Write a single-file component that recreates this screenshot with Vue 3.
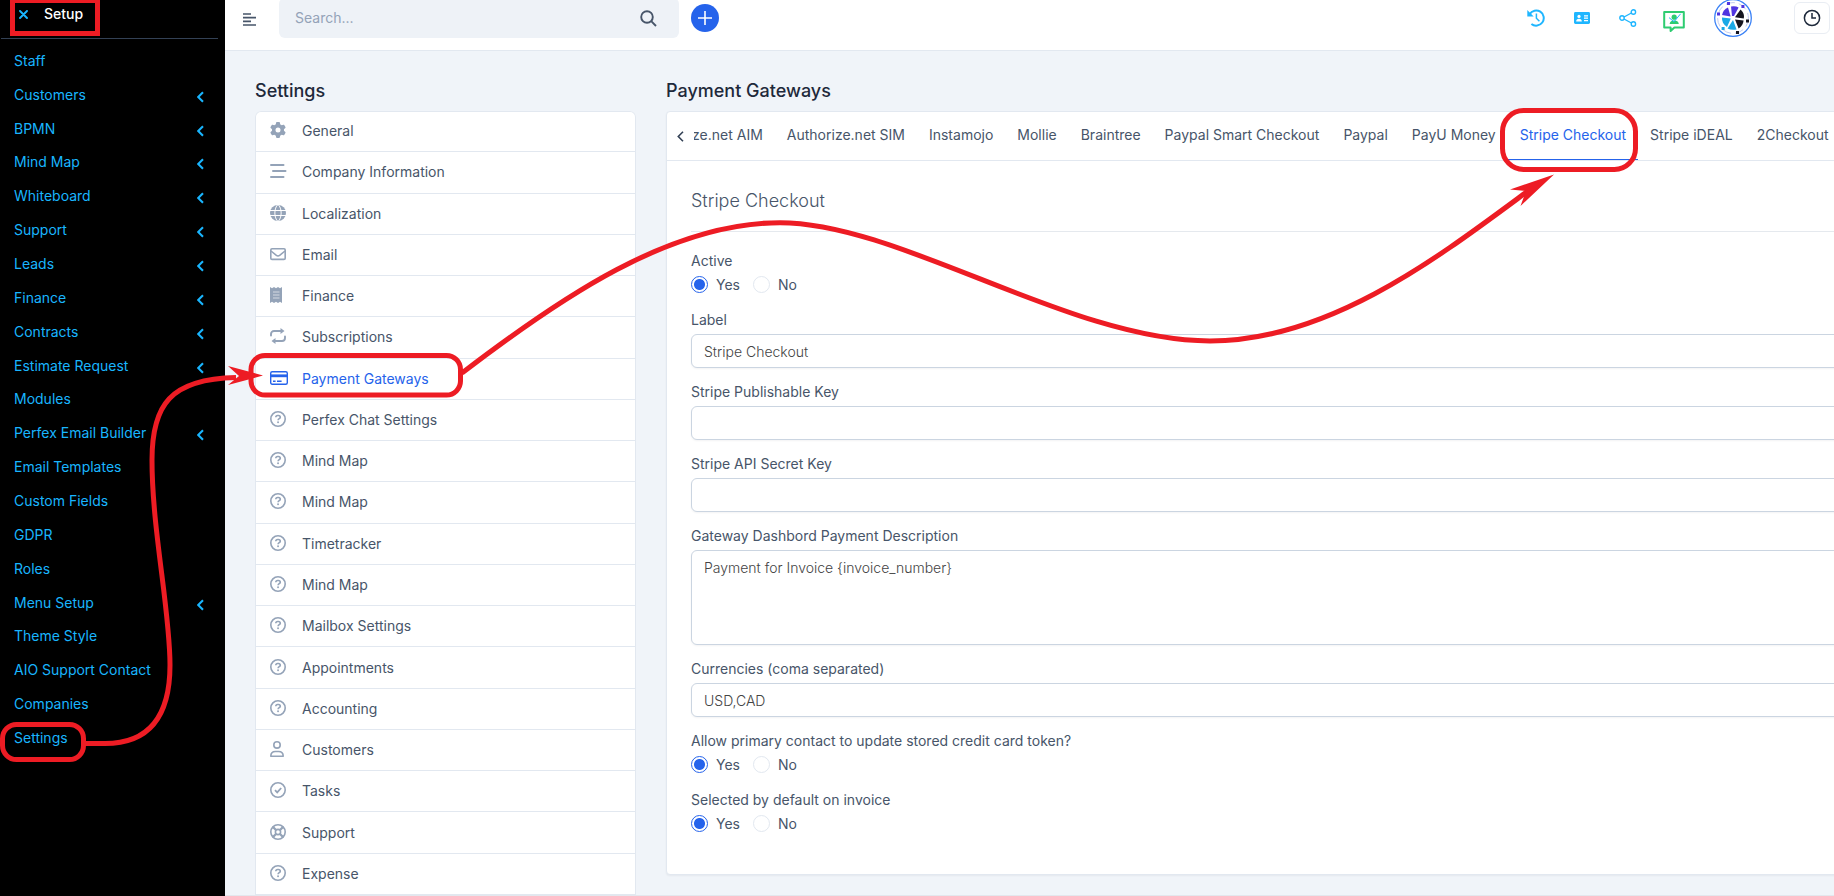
<script setup>
import { reactive } from 'vue'

const setupMenu = [
  { label: 'Staff' },
  { label: 'Customers', sub: true },
  { label: 'BPMN', sub: true },
  { label: 'Mind Map', sub: true },
  { label: 'Whiteboard', sub: true },
  { label: 'Support', sub: true },
  { label: 'Leads', sub: true },
  { label: 'Finance', sub: true },
  { label: 'Contracts', sub: true },
  { label: 'Estimate Request', sub: true },
  { label: 'Modules' },
  { label: 'Perfex Email Builder', sub: true },
  { label: 'Email Templates' },
  { label: 'Custom Fields' },
  { label: 'GDPR' },
  { label: 'Roles' },
  { label: 'Menu Setup', sub: true },
  { label: 'Theme Style' },
  { label: 'AIO Support Contact' },
  { label: 'Companies' },
  { label: 'Settings' },
]

const settings = [
  { label: 'General', icon: 'gear' },
  { label: 'Company Information', icon: 'bars' },
  { label: 'Localization', icon: 'globe' },
  { label: 'Email', icon: 'mail' },
  { label: 'Finance', icon: 'receipt' },
  { label: 'Subscriptions', icon: 'repeat' },
  { label: 'Payment Gateways', icon: 'card', active: true },
  { label: 'Perfex Chat Settings', icon: 'question' },
  { label: 'Mind Map', icon: 'question' },
  { label: 'Mind Map', icon: 'question' },
  { label: 'Timetracker', icon: 'question' },
  { label: 'Mind Map', icon: 'question' },
  { label: 'Mailbox Settings', icon: 'question' },
  { label: 'Appointments', icon: 'question' },
  { label: 'Accounting', icon: 'question' },
  { label: 'Customers', icon: 'user' },
  { label: 'Tasks', icon: 'check' },
  { label: 'Support', icon: 'ring' },
  { label: 'Expense', icon: 'question' },
]

const tabs = [
  'Authorize.net AIM',
  'Authorize.net SIM',
  'Instamojo',
  'Mollie',
  'Braintree',
  'Paypal Smart Checkout',
  'Paypal',
  'PayU Money',
  'Stripe Checkout',
  'Stripe iDEAL',
  '2Checkout',
]
const activeTab = 'Stripe Checkout'

const form = reactive({
  active: 'Yes',
  label: 'Stripe Checkout',
  publishable: '',
  secret: '',
  description: 'Payment for Invoice {invoice_number}',
  currencies: 'USD,CAD',
  updateToken: 'Yes',
  byDefault: 'Yes',
})
const choices = ['Yes', 'No']
</script>

<template>
  <div class="page">
    <aside class="sidebar">
      <div class="side-head">
        <button class="close" type="button" aria-label="Close setup menu">
          <svg width="9" height="9" viewBox="0 0 9 9"><path d="M1 1l7 7M8 1L1 8" fill="none" stroke="currentColor" stroke-width="1.9" stroke-linecap="round" /></svg>
        </button>
        <span>Setup</span>
      </div>
      <nav class="side-nav" aria-label="Setup">
        <a v-for="m in setupMenu" :key="m.label" href="#">
          <span>{{ m.label }}</span>
          <svg v-if="m.sub" class="caret" width="7" height="12" viewBox="0 0 7 12"><path d="M6 1.2L1.2 6L6 10.8" fill="none" stroke="currentColor" stroke-width="2.1" /></svg>
        </a>
      </nav>
    </aside>

    <div class="content">
      <header class="topbar">
        <button class="menu-btn" type="button" aria-label="Toggle menu">
          <svg width="13" height="13" viewBox="0 0 13 13"><path d="M0 1h8M0 4.7h13M0 8.3h8M0 12h13" stroke="#475569" stroke-width="1.7" /></svg>
        </button>
        <div class="search">
          <input type="search" placeholder="Search..." aria-label="Search" />
          <button type="button" aria-label="Run search">
            <svg width="17" height="17" viewBox="0 0 17 17"><g fill="none" stroke="#475569" stroke-width="1.9"><circle cx="7" cy="7" r="5.8" /><path d="M11.2 11.2l4.8 4.8" /></g></svg>
          </button>
        </div>
        <button class="add" type="button" aria-label="Add">
          <svg width="14" height="14" viewBox="0 0 14 14"><path d="M7 0v14M0 7h14" stroke="#fff" stroke-width="1.6" /></svg>
        </button>

        <div class="tools">
          <button type="button" aria-label="History">
            <svg width="18" height="18" viewBox="0 0 18 18"><g fill="none" stroke="#1fb6ff"><path d="M2.6 5.2A7.6 7.6 0 1 1 4.4 15" stroke-width="2" /><path d="M9.4 4.6v4.6l3 3" stroke-width="1.5" /></g><path d="M.3 1v6.4h6.4z" fill="#1fb6ff" /></svg>
          </button>
          <button type="button" aria-label="Contacts">
            <svg width="16" height="12" viewBox="0 0 16 12"><rect width="16" height="12" rx="1.4" fill="#1fb6ff" /><circle cx="5" cy="4.4" r="1.6" fill="#fff" /><path d="M2.2 9.4c0-1.8 1-2.6 2.8-2.6s2.8.8 2.8 2.6zM10 3.2h4v1.2h-4zM10 5.6h4v1.2h-4zM10 8h4v1.2h-4z" fill="#fff" /></svg>
          </button>
          <button type="button" aria-label="Share">
            <svg width="18" height="18" viewBox="0 0 18 18"><g fill="none" stroke="#1fb6ff" stroke-width="1.4"><circle cx="3" cy="9" r="2.2" /><circle cx="14.4" cy="3" r="2.2" /><circle cx="14.4" cy="15" r="2.2" /><path d="M5 8l7.4-4M5 10l7.4 4" /></g></svg>
          </button>
          <button type="button" aria-label="Support chat">
            <svg width="24" height="30" viewBox="0 0 24 30"><path d="M2.2 9h19.6v15.4h-9.4L8.6 28v-3.6H2.2z" fill="none" stroke="#2ecc71" stroke-width="2" stroke-linejoin="round" /><circle cx="12.2" cy="14.2" r="2.6" fill="#2ecc71" /><path d="M7.6 21c.4-2.4 2-3.4 4.6-3.4s4.200 1 4.600 3.400z" fill="#2ecc71" /><path d="M7 14.600l5 4.200 6.600-8" fill="none" stroke="#1fb6ff" stroke-width="1" /></svg>
          </button>
        </div>
        <button class="avatar" type="button" aria-label="Profile">
          <svg width="38" height="38" viewBox="0 0 38 38">
            <circle cx="19" cy="19" r="18.300" fill="#fff" stroke="#3b82f6" stroke-width="1.300" />
            <circle cx="19" cy="19" r="15.400" fill="none" stroke="#c3ccf0" stroke-width="1" stroke-dasharray="9 4" />
            <path d="M18 17L17 7.600Q21 6.400 24.600 8.600L20 17z" fill="#4f35e0" />
            <path d="M16.600 17.600L8 16Q9 10.800 14 8.600z" fill="#4f35e0" />
            <path d="M21 18.200L26.600 10.600Q31 15 29.800 19.400z" fill="#15151f" />
            <path d="M21 20.400L29.600 21.400Q29 26.600 24.600 29.600z" fill="#15151f" />
            <path d="M19 21L22.600 30.400Q17.600 31.600 13.600 29.600z" fill="#19a9e6" />
            <path d="M16.800 19.400L13 28Q7.600 24.600 8 18.600z" fill="#19a9e6" />
            <path d="M13 3h3v3h-3zM27.400 6h3v3h-3zM3 13.600h3v3h-3z" fill="#4f35e0" />
            <path d="M32 20.600h3v3h-3zM22 32h3v3h-3z" fill="#15151f" />
            <path d="M7.600 28h3v3h-3z" fill="#19a9e6" />
          </svg>
        </button>
        <button class="clock" type="button" aria-label="Timers">
          <svg width="18" height="18" viewBox="0 0 18 18"><g fill="none" stroke="#1e293b" stroke-width="1.500"><circle cx="9" cy="9" r="7.600" /><path d="M9 4v5h4" /></g></svg>
        </button>
      </header>

      <main class="grid">
        <section class="col-list">
          <h2>Settings</h2>
          <ul class="settings">
            <li v-for="(s, i) in settings" :key="i">
              <a href="#" :class="{ on: s.active }">
                <svg width="18" height="18" viewBox="0 0 18 18" fill="none" stroke="currentColor" stroke-width="1.600">
                  <path v-if="s.icon === 'gear'" transform="translate(0 1) scale(.03125)" fill="currentColor" stroke="none" d="M495.900 166.600c3.200 8.700 .5 18.400-6.400 24.600l-43.300 39.400c1.100 8.300 1.700 16.800 1.700 25.400s-.6 17.100-1.700 25.400l43.300 39.400c6.900 6.200 9.600 15.900 6.400 24.600c-4.400 11.900-9.700 23.300-15.800 34.300l-4.700 8.100c-6.600 11-14 21.400-22.100 31.200c-5.900 7.200-15.700 9.600-24.500 6.800l-55.700-17.700c-13.400 10.300-28.200 18.900-44 25.400l-12.500 57.100c-2 9.100-9 16.300-18.200 17.800c-13.800 2.300-28 3.500-42.500 3.500s-28.700-1.200-42.500-3.500c-9.200-1.500-16.200-8.700-18.200-17.800l-12.500-57.100c-15.800-6.500-30.600-15.100-44-25.400L83.100 425.900c-8.800 2.800-18.600 .3-24.500-6.800c-8.100-9.800-15.500-20.200-22.100-31.200l-4.700-8.100c-6.100-11-11.400-22.400-15.800-34.300c-3.200-8.700-.5-18.400 6.400-24.600l43.300-39.400C64.600 273.100 64 264.600 64 256s.6-17.100 1.700-25.400L22.400 191.200c-6.900-6.200-9.600-15.900-6.400-24.600c4.400-11.900 9.700-23.300 15.800-34.300l4.700-8.100c6.600-11 14-21.400 22.100-31.200c5.900-7.200 15.700-9.600 24.500-6.800l55.700 17.700c13.400-10.300 28.200-18.900 44-25.400l12.500-57.100c2-9.100 9-16.300 18.200-17.800C227.300 1.200 241.500 0 256 0s28.700 1.200 42.500 3.500c9.200 1.500 16.200 8.700 18.200 17.800l12.500 57.100c15.800 6.500 30.600 15.100 44 25.400l55.700-17.700c8.800-2.800 18.600-.3 24.500 6.800c8.100 9.800 15.500 20.200 22.100 31.200l4.700 8.100c6.100 11 11.400 22.400 15.800 34.300zM256 336a80 80 0 1 0 0-160 80 80 0 1 0 0 160z" />
                  <path v-else-if="s.icon === 'bars'" d="M1 3h12.500M3 9h12.500M1 15h12.500" stroke-width="2" stroke-linecap="round" />
                  <g v-else-if="s.icon === 'globe'">
                    <circle cx="8" cy="9" r="8" fill="currentColor" stroke="none" />
                    <path d="M0 6.500h16M0 11.500h16" stroke="#fff" stroke-width="1" />
                    <path d="M8 .5C3.800 4 3.800 14 8 17.500C12.200 14 12.200 4 8 .5z" stroke="#fff" stroke-width="1" />
                  </g>
                  <g v-else-if="s.icon === 'mail'" stroke-linejoin="round">
                    <rect x=".8" y="3.800" width="14.400" height="10.600" rx="1.200" />
                    <path d="M1 6l5.400 4.400q1.600 1.200 3.200 0L15 6" />
                  </g>
                  <g v-else-if="s.icon === 'receipt'">
                    <path d="M0 1l2 1.300L4 1l2 1.300L8 1l2 1.300L12 1v16l-2-1.300L8 17l-2-1.300L4 17l-2-1.300L0 17z" fill="currentColor" stroke="none" />
                    <path d="M3 6h6.500M3 9h6.500M3 12h6.500" stroke="#fff" stroke-width="1" opacity=".6" />
                  </g>
                  <g v-else-if="s.icon === 'repeat'" stroke-width="1.900">
                    <path d="M1 8.500V7a3 3 0 0 1 3-3h7.500M15 9.500V11a3 3 0 0 1-3 3H4.500" stroke-linecap="round" />
                    <path d="M10.500 1l4 3-4 3zM5.500 11l-4 3 4 3z" fill="currentColor" stroke="none" />
                  </g>
                  <g v-else-if="s.icon === 'card'">
                    <rect x=".7" y="2.700" width="16.600" height="12.600" rx="1.500" stroke-width="1.400" />
                    <path d="M1 6.800h16" stroke-width="2.800" />
                    <path d="M3 12.200h2.600M7 12.200h4.600" stroke-width="1.400" />
                  </g>
                  <g v-else-if="s.icon === 'user'">
                    <circle cx="7" cy="4.900" r="3.200" />
                    <path d="M.8 16.200c0-3.200 1.800-4.700 4.600-4.700h3.200c2.800 0 4.600 1.500 4.600 4.700z" stroke-linejoin="round" />
                  </g>
                  <g v-else-if="s.icon === 'check'">
                    <circle cx="8" cy="9" r="7.200" />
                    <path d="M5 9.200l2.200 2.200L11.200 7" stroke-width="1.800" />
                  </g>
                  <g v-else-if="s.icon === 'ring'">
                    <circle cx="8" cy="9" r="7.200" />
                    <circle cx="8" cy="9" r="2.600" />
                    <path d="M2.600 3.600l3.400 3.400M13.400 3.600L10 7M2.600 14.400L6 11M13.400 14.400L10 11" stroke-width="2.200" />
                  </g>
                  <g v-else>
                    <circle cx="8" cy="9" r="7.200" />
                    <path d="M5.800 7.200c0-1.100.8-1.700 1.900-1.700h.7c1.200 0 1.900.7 1.900 1.700 0 1.500-2.200 1.500-2.200 3" />
                    <circle cx="8.050" cy="12.300" r=".95" fill="currentColor" stroke="none" />
                  </g>
                </svg>
                <span>{{ s.label }}</span>
              </a>
            </li>
          </ul>
        </section>

        <section class="col-form">
          <h2>Payment Gateways</h2>
          <div class="card">
            <div class="tabbar">
              <button class="prev" type="button" aria-label="Previous tabs">
                <svg width="7" height="11" viewBox="0 0 7 11"><path d="M6 .8L1.300 5.500L6 10.200" fill="none" stroke="#334155" stroke-width="1.600" /></svg>
              </button>
              <div class="scroller">
                <nav class="tabs" aria-label="Gateways">
                  <a v-for="t in tabs" :key="t" href="#" :class="{ on: t === activeTab }">{{ t }}</a>
                </nav>
              </div>
            </div>

            <form class="body" @submit.prevent>
              <h3>Stripe Checkout</h3>
              <div class="fields">
                <fieldset>
                  <legend>Active</legend>
                  <div class="radios">
                    <label v-for="c in choices" :key="c"><input v-model="form.active" type="radio" name="active" :value="c" />{{ c }}</label>
                  </div>
                </fieldset>
                <div class="field">
                  <label for="f-label">Label</label>
                  <input id="f-label" v-model="form.label" type="text" />
                </div>
                <div class="field">
                  <label for="f-pub">Stripe Publishable Key</label>
                  <input id="f-pub" v-model="form.publishable" type="text" />
                </div>
                <div class="field">
                  <label for="f-secret">Stripe API Secret Key</label>
                  <input id="f-secret" v-model="form.secret" type="text" />
                </div>
                <div class="field">
                  <label for="f-desc">Gateway Dashbord Payment Description</label>
                  <textarea id="f-desc" v-model="form.description"></textarea>
                </div>
                <div class="field">
                  <label for="f-cur">Currencies (coma separated)</label>
                  <input id="f-cur" v-model="form.currencies" type="text" />
                </div>
                <fieldset>
                  <legend>Allow primary contact to update stored credit card token?</legend>
                  <div class="radios">
                    <label v-for="c in choices" :key="c"><input v-model="form.updateToken" type="radio" name="token" :value="c" />{{ c }}</label>
                  </div>
                </fieldset>
                <fieldset>
                  <legend>Selected by default on invoice</legend>
                  <div class="radios">
                    <label v-for="c in choices" :key="c"><input v-model="form.byDefault" type="radio" name="default" :value="c" />{{ c }}</label>
                  </div>
                </fieldset>
              </div>
            </form>
          </div>
        </section>
      </main>
    </div>

    <!-- Walkthrough markers: Setup, Settings, Payment Gateways, Stripe Checkout -->
    <svg class="marks" width="1834" height="896" viewBox="0 0 1834 896" aria-hidden="true">
      <g fill="none" stroke="#ed1c24" stroke-width="5">
        <rect x="12.500" y=".5" width="85" height="33" />
        <rect x="2.500" y="724.500" width="81" height="35" rx="14" />
        <rect x="251" y="355.500" width="209.500" height="39.500" rx="14" />
        <rect x="1502.500" y="110.500" width="133" height="59" rx="21" />
        <path d="M85 743.500H105C150 743.500 170 715 170 665C170 610 152 530 152 460C152 405 170 379 236 377.500" />
        <path d="M462 373C560 298 670 222.700 780 222.700C900 222.700 1070 341 1210 341C1330 341 1440 256 1528 191" />
      </g>
      <path d="M263 375.500L228 366L239 376L228 385Z" fill="#ed1c24" />
      <path d="M1554 174.500L1510 189.500L1526 191L1520.500 206Z" fill="#ed1c24" />
    </svg>
  </div>
</template>

<style>
body {
  margin: 0;
  background: #f0f4f9;
}
</style>

<style scoped>
.page {
  position: relative;
  display: flex;
  height: 100vh;
  overflow: hidden;
  background: #f0f4f9;
  color: #475569;
  font: 14px/20px Inter, "Liberation Sans", sans-serif;
}
.page * {
  box-sizing: border-box;
}
a {
  color: inherit;
  text-decoration: none;
}
button {
  display: flex;
  align-items: center;
  justify-content: center;
  padding: 0;
  border: 0;
  background: none;
  color: inherit;
  cursor: pointer;
}
svg {
  display: block;
  flex: none;
}
.sidebar {
  display: flex;
  flex: none;
  flex-direction: column;
  width: 225px;
  padding-bottom: 141px;
  background: #000;
  color: #19b5fe;
}
.side-head {
  display: flex;
  align-items: flex-start;
  gap: 16px;
  height: 39px;
  margin: 0 7px 5px 1px;
  padding: 4px 18px;
  border-bottom: 1px solid #334155;
}
.side-head span {
  color: #fff;
  font-weight: 500;
}
.close {
  height: 20px;
}
.side-nav {
  display: grid;
  flex: 1;
  grid-auto-rows: 1fr;
}
.side-nav a {
  display: flex;
  align-items: center;
  justify-content: space-between;
  padding: 0 21px 0 14px;
}
.caret {
  margin-top: 4px;
}
.content {
  display: flex;
  flex: 1;
  flex-direction: column;
  min-width: 0;
  border-bottom: 1px solid #e3e7ed;
}
.topbar {
  display: flex;
  flex: none;
  align-items: center;
  margin-top: -2px;
  padding: 0 4px 12px 18px;
  border-bottom: 1px solid #e2e8f0;
  background: #fff;
}
.menu-btn {
  margin: 3px 23px 0 0;
}
.search {
  display: flex;
  width: 400px;
  height: 40px;
  border-radius: 6px;
  background: #eef2f7;
}
.search input {
  flex: 1;
  min-width: 0;
  padding: 0 16px;
  border: 0;
  background: none;
  color: #475569;
  font: inherit;
}
.search input::placeholder {
  color: #94a3b8;
}
.search button {
  width: 62px;
}
.add {
  width: 28px;
  height: 28px;
  margin-left: 12px;
  border-radius: 50%;
  background: #2563eb;
}
.tools {
  display: flex;
  gap: 22px;
  margin-left: auto;
}
.tools button {
  width: 24px;
  height: 30px;
}
.avatar {
  margin-left: 28px;
}
.clock {
  width: 36px;
  height: 32px;
  margin-left: 42px;
  border: 1px solid #e9edf3;
  border-radius: 6px;
}
.grid {
  display: grid;
  flex: 1;
  grid-template-columns: repeat(4, 1fr);
  gap: 30px;
  min-height: 0;
  margin: 0 -35px 0 30px;
  padding-top: 26px;
}
.col-list {
  display: flex;
  flex-direction: column;
  min-width: 0;
}
.col-form {
  grid-column: span 3;
  min-width: 0;
}
h2 {
  margin: 0 0 6px;
  color: #1e293b;
  font-size: 18px;
  font-weight: 500;
  line-height: 28px;
}
.settings {
  display: grid;
  flex: 1;
  grid-auto-rows: 1fr;
  margin: 0;
  padding: 0;
  border-radius: 6px 6px 0 0;
  background: #fff;
  box-shadow: inset 0 0 0 1px #e2e8f0;
  list-style: none;
}
.settings li {
  display: grid;
  border-bottom: 1px solid #e2e8f0;
}
.settings a {
  display: flex;
  align-items: center;
  gap: 14px;
  padding: 0 15px;
}
.settings svg {
  margin-bottom: 2px;
  color: #94a3b8;
}
.settings .on,
.settings .on svg {
  color: #2563eb;
}
.card {
  border: 1px solid #e2e8f0;
  border-radius: 4px;
  background: #fff;
  box-shadow: 0 1px 2px #0f172a0d;
}
.tabbar {
  display: flex;
  border-bottom: 1px solid #e2e8f0;
}
.prev {
  width: 27px;
}
.scroller {
  flex: 1;
  min-width: 0;
  overflow: hidden;
}
.tabs {
  display: flex;
  margin-left: -62px;
  white-space: nowrap;
}
.tabs a {
  flex: none;
  padding: 13px 12px 14px;
  border-bottom: 1px solid transparent;
}
.tabs .on {
  border-color: #2563eb;
  color: #2563eb;
}
.body {
  padding: 25px 24px 39px;
}
h3 {
  margin: 0 0 19px;
  padding-bottom: 15px;
  border-bottom: 1px solid #e5e9ee;
  font-size: 18px;
  font-weight: 300;
  line-height: 30px;
}
.fields {
  display: grid;
  gap: 14px;
}
fieldset {
  min-width: 0;
  margin: 0;
  padding: 0;
  border: 0;
}
legend {
  padding: 0;
}
.radios {
  display: flex;
  gap: 13px;
  height: 21px;
  margin-top: 4px;
}
.radios label {
  display: flex;
  align-items: flex-start;
  gap: 8px;
}
.radios input {
  width: 17px;
  height: 17px;
  margin: 1px 0 0;
  border: 1px solid #e2e8f0;
  border-radius: 50%;
  appearance: none;
  background: #fff;
}
.radios input:checked {
  border-color: #2563eb;
  background: radial-gradient(circle, #2563eb 5px, #fff 6px);
}
.field {
  display: grid;
  gap: 4px;
}
.field input,
.field textarea {
  width: 100%;
  height: 34px;
  padding: 6px 12px;
  border: 1px solid #cbd5e1;
  border-radius: 6px;
  background: #fff;
  color: #444;
  font: inherit;
  font-weight: 300;
  box-shadow: 0 1px 2px #0f172a0d;
}
.field textarea {
  display: block;
  height: 95px;
  padding-top: 7px;
}
.marks {
  position: absolute;
  top: 0;
  left: 0;
  pointer-events: none;
}
</style>
